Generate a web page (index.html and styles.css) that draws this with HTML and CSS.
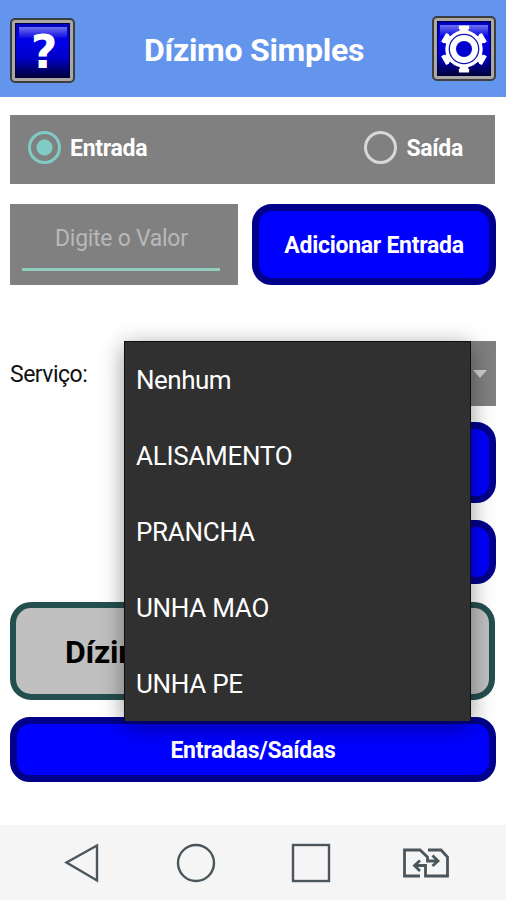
FILE: index.html
```html
<!DOCTYPE html>
<html lang="pt-BR">
<head>
<meta charset="utf-8">
<title>Dízimo Simples</title>
<link rel="stylesheet" href="styles.css">
</head>
<body>
<header class="header">
  <button class="tile help" aria-label="Ajuda"><span class="face">?</span></button>
  <h1 class="title"><span>Dízimo Simples</span></h1>
  <button class="tile settings" aria-label="Configurações"><span class="face">
    <svg width="46" height="48" viewBox="-23 -24 46 48">
      <g fill="#fff">
        <circle r="18.700"/>
        <path id="tooth" d="M-6 -15L-4 -19L-5.300 -20.500L-5 -23.500H5L5.300 -20.500L4 -19L6 -15Z"/>
        <use href="#tooth" transform="rotate(60)"/>
        <use href="#tooth" transform="rotate(120)"/>
        <use href="#tooth" transform="rotate(180)"/>
        <use href="#tooth" transform="rotate(240)"/>
        <use href="#tooth" transform="rotate(300)"/>
      </g>
      <circle r="14.700" fill="none" stroke="#1414b8" stroke-width="1.300"/>
      <circle r="8" fill="#0000cf"/>
    </svg></span></button>
</header>
<main class="main">
  <div class="radios">
    <div class="radio on"><i class="ring"></i><span>Entrada</span></div>
    <div class="radio off"><i class="ring"></i><span>Saída</span></div>
  </div>
  <div class="entry">
    <div class="field"><div class="hint"><span>Digite o Valor</span></div></div>
    <button class="btn add"><span>Adicionar Entrada</span></button>
  </div>
  <div class="service">
    <div class="label"><span>Serviço:</span></div>
    <div class="spinner">
      <svg class="caret" width="14" height="8" viewBox="0 0 14 8"><path d="M0 0H14L7 8Z" fill="#d0d0d0"/></svg>
      <ul class="menu">
        <li><span class="i1">Nenhum</span></li>
        <li><span class="i2">ALISAMENTO</span></li>
        <li><span class="i3">PRANCHA</span></li>
        <li><span class="i4">UNHA MAO</span></li>
        <li><span class="i5">UNHA PE</span></li>
      </ul>
    </div>
  </div>
  <button class="btn tall"></button>
  <button class="btn short"></button>
  <div class="total"><span>Dízimo:</span></div>
  <button class="btn list"><span>Entradas/Saídas</span></button>
</main>
<nav class="nav">
  <svg width="506" height="75" viewBox="0 825 506 75" fill="none" stroke="#4a555c" stroke-width="2.400">
    <path d="M66.500 862.500L97 845.500V880.500Z"/>
    <circle cx="196" cy="863" r="18"/>
    <rect x="293" y="845" width="36" height="36"/>
    <g stroke-width="2.800">
      <path d="M420 876H404.500V850H420L427.500 857V861H437"/>
      <path d="M428 850H441L447.500 857V876H425.500V865.500H415"/>
      <path d="M432.500 855.500L438 861L432.500 866M420 860.500L414.500 865.500L420 871"/>
    </g>
  </svg>
</nav>
</body>
</html>
```
FILE: styles.css
```css
* { box-sizing: border-box; }
body {
  margin: 0;
  width: 506px;
  height: 900px;
  display: flex;
  flex-direction: column;
  overflow: hidden;
  background: #fff;
  font-family: Roboto, sans-serif;
  font-size: 23px;
  letter-spacing: -.28px;
}
button { border: 0; padding: 0; font: inherit; letter-spacing: inherit; }
span { white-space: nowrap; }
.header {
  height: 97px;
  padding: 16px 10px 0 10px;
  background: #6495ed;
  display: flex;
  justify-content: space-between;
  align-items: flex-start;
}
.tile {
  width: 65px;
  height: 65px;
  border: 2px solid #3c3e40;
  border-radius: 5px;
  background: #aaa7a5;
  padding: 3px;
}
.settings { width: 64px; }
.help { margin-top: 2px; }
.face {
  height: 100%;
  display: flex;
  align-items: center;
  justify-content: center;
  border: 1px solid #00003c;
  background:
    linear-gradient(rgba(150, 150, 255, .75), rgba(60, 60, 255, .2)) 50% 3px / 48px 11px no-repeat,
    linear-gradient(#0000c0, #0000e8 35%, #0000c8 65%, #00003c);
  color: #fff;
  font: bold 46px "DejaVu Sans", sans-serif;
}
.help .face { padding: 2px 0 0 3px; }
.title {
  margin: 0 0 0 1px;
  color: #fff;
  font-size: 32px;
  line-height: 68px;
}
.main {
  height: 728px;
  padding: 17.500px 10px 0 10px;
}
.radios {
  height: 69px;
  margin-right: 1px;
  padding: 0 32px 0 18px;
  background: #808080;
  display: flex;
  align-items: center;
  justify-content: space-between;
}
.radio {
  display: flex;
  align-items: center;
  gap: 9px;
  padding-bottom: 3px;
  color: #fff;
  font-weight: bold;
}
.radio span { padding-top: 1px; }
.ring {
  width: 33px;
  height: 33px;
  border: 3px solid #d8d8d8;
  border-radius: 50%;
}
.on .ring {
  border-color: #80cbc4;
  background: radial-gradient(circle, #80cbc4 7.500px, transparent 8.500px);
}
.entry {
  margin-top: 20.500px;
  height: 81px;
  display: flex;
  justify-content: space-between;
}
.field {
  width: 228px;
  padding: 0 18px 14px 12px;
  background: #808080;
}
.hint {
  height: 67px;
  border-bottom: 3px solid #8fcdbf;
  padding-left: 33px;
  color: #b8b8b8;
  line-height: 69px;
}
.btn {
  display: flex;
  align-items: center;
  justify-content: center;
  width: 100%;
  border: 7px solid #00008b;
  border-radius: 20px;
  background: #00f;
  color: #fff;
  font-weight: bold;
}
.btn span { padding-top: 2px; }
.add { width: 244px; }
.service {
  height: 65px;
  margin-top: 56px;
  display: flex;
}
.label { width: 113.500px; line-height: 67px; color: #111; letter-spacing: -.5px; }
.spinner {
  position: relative;
  flex: 1;
  background: #808080;
  display: flex;
  align-items: center;
  justify-content: flex-end;
  padding-right: 9px;
}
.menu {
  position: absolute;
  z-index: 1;
  left: 0;
  top: 0;
  width: 347px;
  height: 380px;
  margin: 0;
  padding: 0 0 0 11.500px;
  list-style: none;
  background: #303030;
  border: solid #101010;
  border-width: 1px 1px 0;
  box-shadow: 0 5px 22px rgba(0, 0, 0, .42);
  color: #fff;
  font-size: 26px;
}
.menu li { height: 76px; line-height: 76px; }
.i1 { letter-spacing: -.5px; }
.tall, .short { width: 244px; margin-left: auto; }
.tall { height: 81px; margin-top: 16px; }
.short { height: 64px; margin-top: 17px; }
.total {
  height: 98px;
  margin: 18px 1px 0 0;
  border: 6.500px solid #234f4e;
  border-radius: 21px;
  background: #c0c0c0;
  padding-left: 49px;
  font-size: 32px;
  font-weight: bold;
  line-height: 88px;
}
.list { height: 65px; margin-top: 17px; }
.nav { height: 75px; background: #f5f5f5; }
.nav svg { display: block; }
```
